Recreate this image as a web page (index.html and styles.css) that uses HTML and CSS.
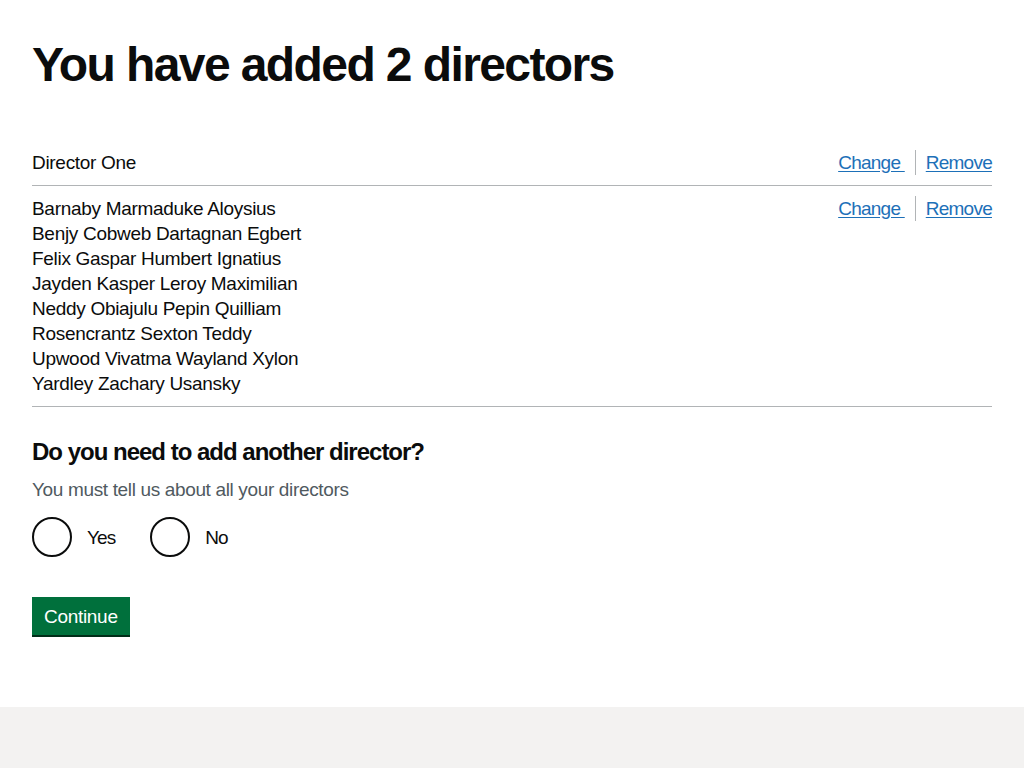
FILE: index.html
```html
<!DOCTYPE html>
<html lang="en">
<head>
<meta charset="utf-8">
<title>You have added 2 directors</title>
<link rel="stylesheet" href="styles.css">
</head>
<body>
<div class="container">
  <main class="main">
    <h1 class="heading-xl">You have added 2 directors</h1>
    <dl class="summary-list">
      <div class="summary-row">
        <dd class="summary-value">Director One</dd>
        <dd class="summary-actions">
          <ul class="actions-list">
            <li class="actions-item"><a class="link" href="#">Change </a></li>
            <li class="actions-item"><a class="link" href="#">Remove</a></li>
          </ul>
        </dd>
      </div>
      <div class="summary-row">
        <dd class="summary-value">
          Barnaby Marmaduke Aloysius<br>
          Benjy Cobweb Dartagnan Egbert<br>
          Felix Gaspar Humbert Ignatius<br>
          Jayden Kasper Leroy Maximilian<br>
          Neddy Obiajulu Pepin Quilliam<br>
          Rosencrantz Sexton Teddy<br>
          Upwood Vivatma Wayland Xylon<br>
          Yardley Zachary Usansky
        </dd>
        <dd class="summary-actions">
          <ul class="actions-list">
            <li class="actions-item"><a class="link" href="#">Change </a></li>
            <li class="actions-item"><a class="link" href="#">Remove</a></li>
          </ul>
        </dd>
      </div>
    </dl>
    <form class="form">
      <div class="form-group">
        <fieldset class="fieldset">
          <legend class="legend-m">Do you need to add another director?</legend>
          <div class="hint">You must tell us about all your directors</div>
          <div class="radios">
            <div class="radio-item">
              <input class="radio-input" id="yes" name="another" type="radio" value="yes">
              <label class="radio-label" for="yes">Yes</label>
            </div>
            <div class="radio-item">
              <input class="radio-input" id="no" name="another" type="radio" value="no">
              <label class="radio-label" for="no">No</label>
            </div>
          </div>
        </fieldset>
      </div>
      <button class="button" type="submit">Continue</button>
    </form>
  </main>
</div>
<footer class="footer"></footer>
</body>
</html>
```

FILE: styles.css
```css
html, body {
  margin: 0;
  padding: 0;
  background: #ffffff;
}
body {
  font-family: "Liberation Sans", Arial, sans-serif;
  color: #0b0c0c;
  font-size: 19px;
  line-height: 25px;
  letter-spacing: -0.3px;
}
.container {
  max-width: 960px;
  margin: 0 32px;
}
.main {
  padding: 40px 0 40px;
}
.heading-xl {
  margin: 0 0 50px;
  font-size: 48px;
  line-height: 50px;
  font-weight: 700;
  letter-spacing: -1.6px;
}
.summary-list {
  margin: 0 0 30px;
  padding: 0;
}
.summary-row {
  display: flex;
  justify-content: space-between;
  border-bottom: 1px solid #b1b4b6;
}
.summary-value, .summary-actions {
  margin: 0;
  padding: 10px 0;
}
.summary-actions {
  text-align: right;
}
.actions-list {
  display: flex;
  list-style: none;
  margin: 0;
  padding: 0;
}
.actions-item {
  padding: 0 10px;
  border-left: 1px solid #b1b4b6;
}
.actions-item:first-child {
  padding-left: 0;
  border-left: 0;
}
.actions-item:last-child {
  padding-right: 0;
}
.link {
  color: #1d70b8;
  text-decoration: underline;
  text-underline-offset: 2px;
  white-space: pre;
  letter-spacing: -0.75px;
}
.form-group {
  margin-bottom: 30px;
}
.fieldset {
  margin: 0;
  padding: 0;
  border: 0;
  min-width: 0;
}
.legend-m {
  padding: 0;
  margin: 0 0 10px;
  font-size: 24px;
  line-height: 30px;
  font-weight: 700;
  letter-spacing: -1px;
}
.hint {
  color: #505a5f;
  margin-bottom: 15px;
  letter-spacing: -0.35px;
}
.radios {
  display: flex;
}
.radio-item {
  display: flex;
  align-items: center;
  margin: 0 20px 10px 0;
}
.radio-input {
  appearance: none;
  -webkit-appearance: none;
  margin: 0;
  width: 40px;
  height: 40px;
  border: 2px solid #0b0c0c;
  border-radius: 50%;
  box-sizing: border-box;
  background: #ffffff;
}
.radio-label {
  padding: 6px 15px 6px;
  letter-spacing: -0.9px;
}
.button {
  font-family: inherit;
  font-size: 19px;
  line-height: 19px;
  letter-spacing: -0.3px;
  color: #ffffff;
  background: #00703c;
  border: 2px solid transparent;
  border-radius: 0;
  padding: 8px 10px 7px;
  margin: 0 0 32px;
  box-shadow: 0 2px 0 #002d18;
  cursor: pointer;
}
.footer {
  background: #f3f2f1;
  height: 61px;
}
```
